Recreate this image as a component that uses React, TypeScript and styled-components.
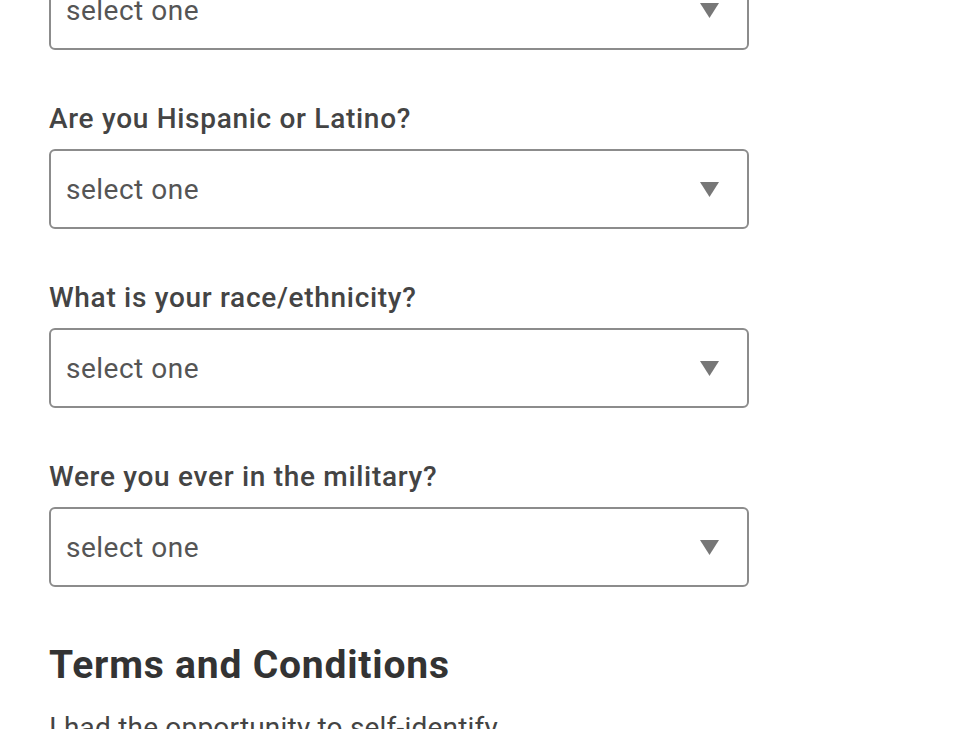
import * as React from 'react';
import styled, { createGlobalStyle } from 'styled-components';

const GlobalStyle = createGlobalStyle`
	html, body {
		margin: 0;
		padding: 0;
		background: #ffffff;
		overflow: hidden;
	}
	body {
		font-family: Roboto, "Liberation Sans", Arial, sans-serif;
	}
`;

// the page is scrolled: the first question's label sits above the window
const Page = styled.div`
	width: 700px;
	padding: 0 49px;
	margin-top: -77px;
	display: flex;
	flex-direction: column;
`;

const Field = styled.div`
	display: flex;
	flex-direction: column;
	gap: 13px;
	margin-bottom: 52px;
`;

const Label = styled.label`
	font-size: 28px;
	line-height: 34px;
	font-weight: 500;
	letter-spacing: 0.7px;
	color: #444444;
`;

const SelectBox = styled.div`
	box-sizing: border-box;
	height: 80px;
	border: 2px solid #8c8c8c;
	border-radius: 6px;
	padding: 0 28px 0 15px;
	display: flex;
	align-items: center;
	justify-content: space-between;
	font-size: 28px;
	letter-spacing: 0.5px;
	color: #555555;
	background: #ffffff;
`;

const Arrow = styled.svg`
	width: 19px;
	height: 15px;
	fill: #777777;
`;

const Heading = styled.h2`
	margin: 1px 0 0;
	font-size: 39px;
	line-height: 50px;
	font-weight: 700;
	letter-spacing: 0.8px;
	color: #333333;
`;

const Paragraph = styled.p`
	margin: 20px 0 0;
	font-size: 28px;
	line-height: 36px;
	letter-spacing: 0.2px;
	color: #444444;
`;

interface SelectFieldProps {
	label: string;
	placeholder?: string;
}

const SelectField: React.FC<SelectFieldProps> = (props) => {
	const { label, placeholder = 'select one' } = props;
	return (
		<Field>
			<Label>{label}</Label>
			<SelectBox role="combobox">
				<span>{placeholder}</span>
				<Arrow viewBox="0 0 19 15">
					<polygon points="0,0 19,0 9.5,15" />
				</Arrow>
			</SelectBox>
		</Field>
	);
};

const questions = [
	'What is your gender?',
	'Are you Hispanic or Latino?',
	'What is your race/ethnicity?',
	'Were you ever in the military?',
];

export default function App() {
	return (
		<>
			<GlobalStyle />
			<Page>
				{questions.map((q) => <SelectField key={q} label={q} />)}
				<Heading>Terms and Conditions</Heading>
				<Paragraph>I had the opportunity to self-identify</Paragraph>
			</Page>
		</>
	);
}
